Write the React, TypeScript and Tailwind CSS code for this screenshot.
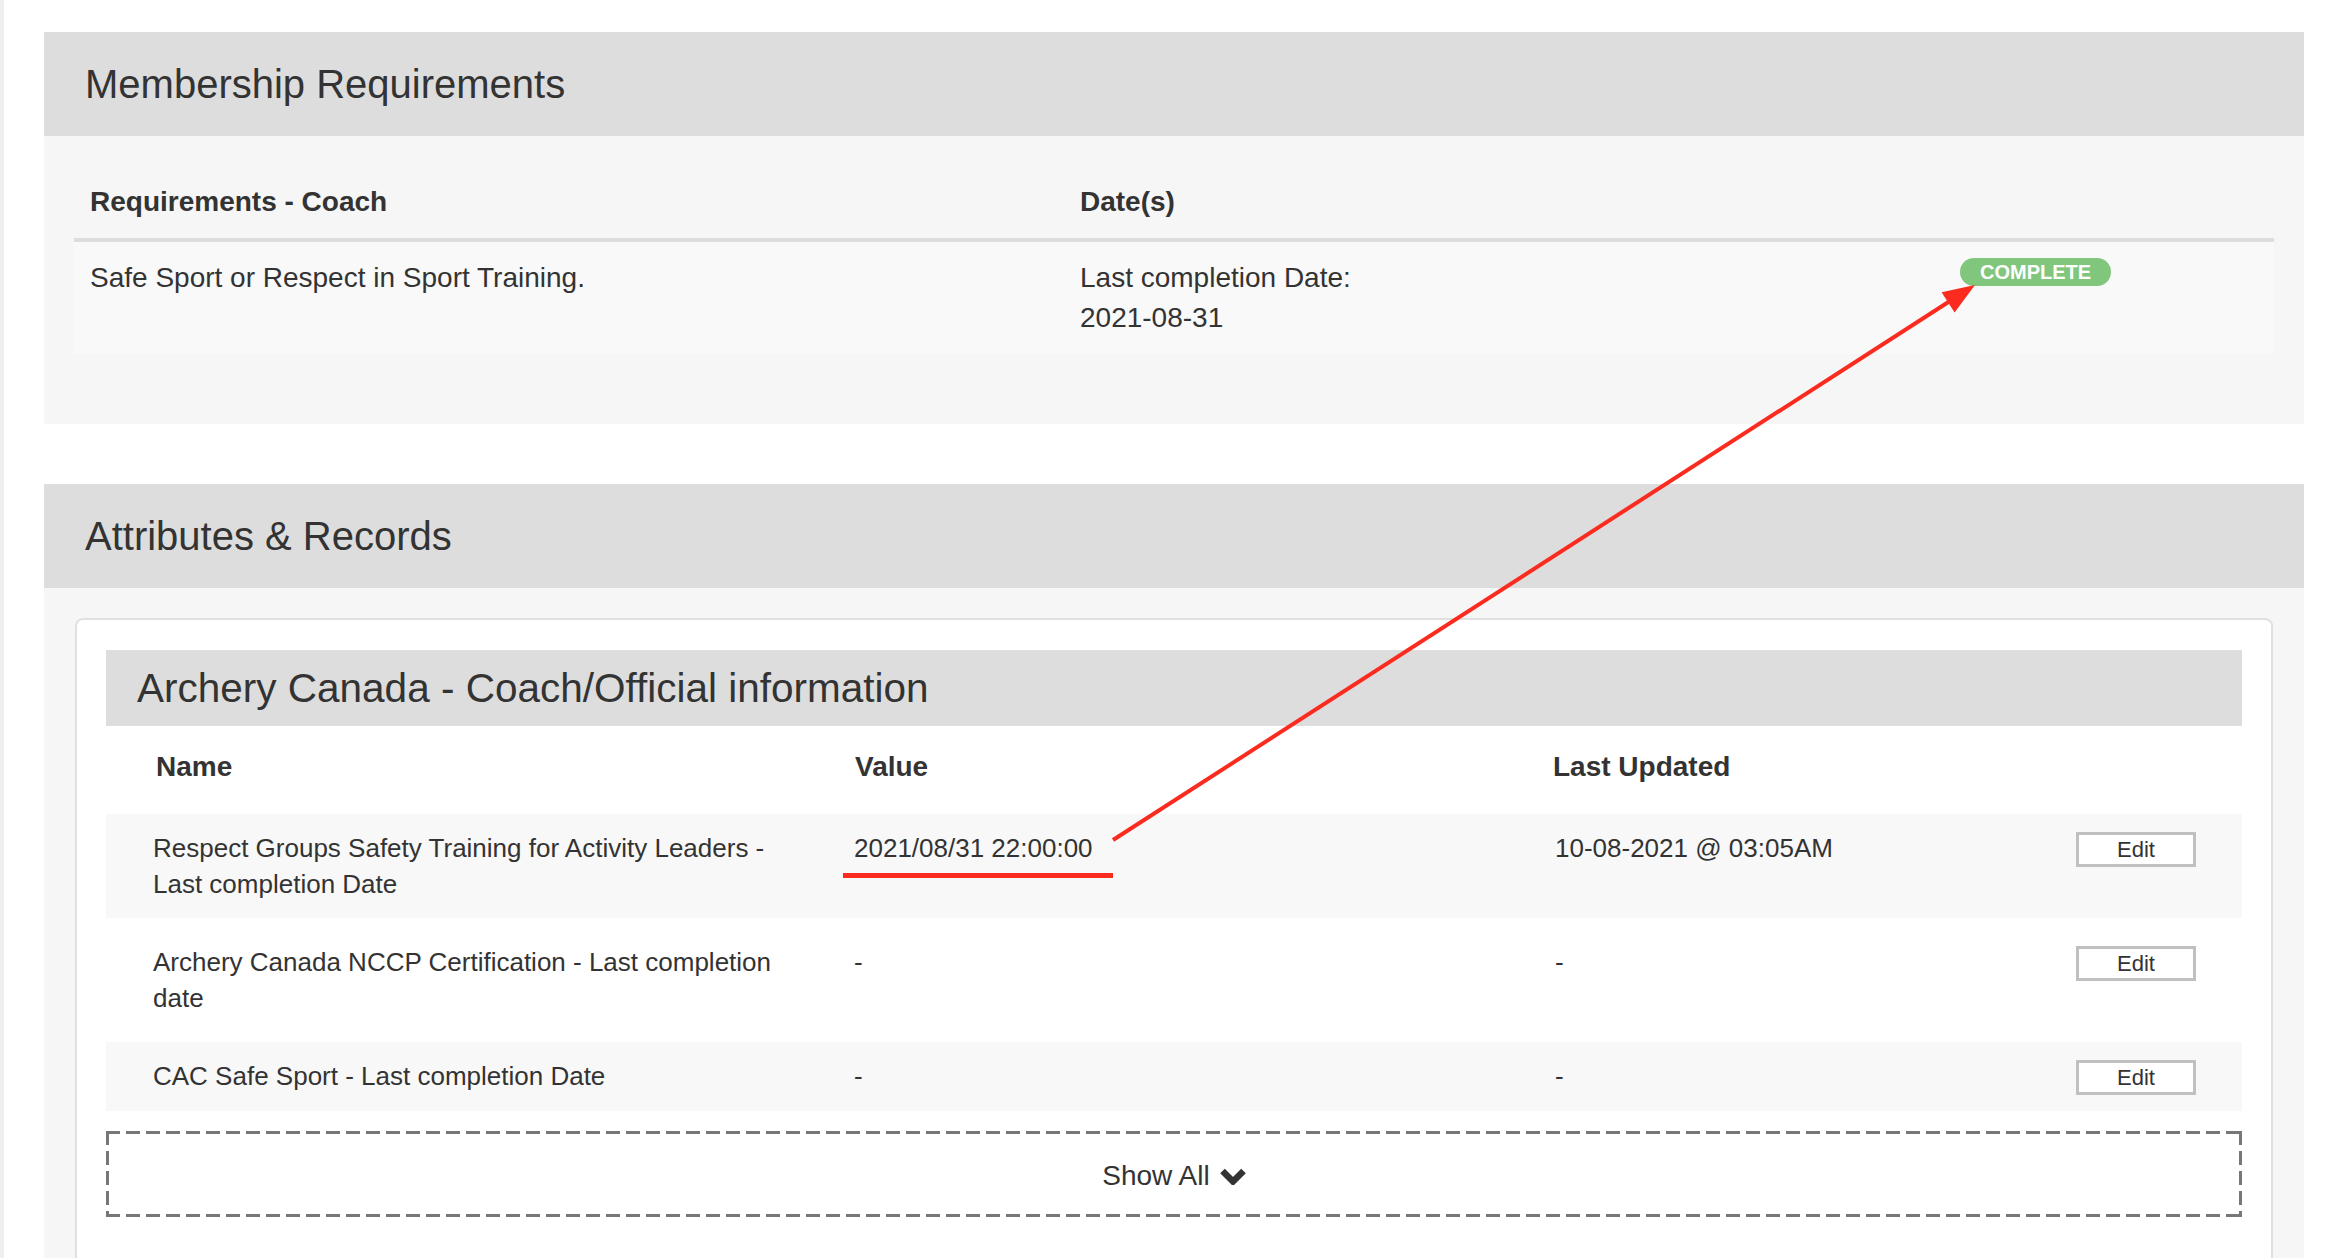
import React from 'react';

const requirements = [
  { name: 'Safe Sport or Respect in Sport Training.', dates: ['Last completion Date:', '2021-08-31'], status: 'COMPLETE' },
];

const records = [
  {
    name: 'Respect Groups Safety Training for Activity Leaders - Last completion Date',
    value: '2021/08/31 22:00:00',
    updated: '10-08-2021 @ 03:05AM',
    pad: 'py-[16px] bg-[#f8f8f8]',
  },
  {
    name: 'Archery Canada NCCP Certification - Last completion date',
    value: '-',
    updated: '-',
    pad: 'py-[26px] bg-white',
  },
  {
    name: 'CAC Safe Sport - Last completion Date',
    value: '-',
    updated: '-',
    pad: 'py-[16px] bg-[#f8f8f8]',
  },
];

const SectionHeader: React.FC<{ title: string }> = ({ title }) => (
  <div className="h-[104px] bg-[#dddddd] pl-[41px] flex items-center">
    <h2 className="text-[40px] font-normal text-[#333]">{title}</h2>
  </div>
);

const EditButton = () => (
  <button className="w-[120px] h-[35px] border-[3px] border-[#c0c0c0] bg-white text-[22px] leading-[29px] text-[#333]">
    Edit
  </button>
);

const Annotation = () => (
  <svg
    className="absolute left-0 top-0 pointer-events-none"
    width="2328"
    height="1258"
    viewBox="0 0 2328 1258"
  >
    <rect x="843" y="873" width="270" height="5" fill="#fb2b1f" />
    <line x1="1113" y1="840" x2="1950" y2="301" stroke="#fb2b1f" strokeWidth="4" />
    <polygon points="1975,285 1954.6,312.4 1941.6,292.2" fill="#fb2b1f" />
  </svg>
);

export default function App() {
  return (
    <div className="relative min-h-screen bg-white flex font-['Liberation_Sans',Arial,sans-serif] text-[#333] overflow-hidden">
      <div className="w-[4px] shrink-0 bg-[#efefef]" />
      <div className="flex-1 pl-[40px] pr-[24px] pt-[32px]">
        {/* Membership Requirements */}
        <SectionHeader title="Membership Requirements" />
        <div className="bg-[#f6f6f6] px-[30px] pt-[30px] pb-[70px]">
          <div className="grid grid-cols-[990px_880px_1fr] h-[76px] items-center border-b-4 border-[#dddddd] text-[28px] font-bold">
            <div className="pl-[16px]">Requirements - Coach</div>
            <div className="pl-[16px]">Date(s)</div>
            <div />
          </div>
          {requirements.map((r) => (
            <div key={r.name} className="grid grid-cols-[990px_880px_1fr] py-[16px] bg-[#f9f9f9] text-[28px] leading-[40px]">
              <div className="pl-[16px]">{r.name}</div>
              <div className="pl-[16px]">
                {r.dates.map((d) => (
                  <div key={d}>{d}</div>
                ))}
              </div>
              <div className="pl-[16px]">
                <span className="block w-fit h-[28px] px-[20px] rounded-full bg-[#80c67d] text-white text-[20px] font-bold leading-[28px]">
                  {r.status}
                </span>
              </div>
            </div>
          ))}
        </div>

        {/* Attributes & Records */}
        <div className="mt-[60px]">
          <SectionHeader title="Attributes & Records" />
          <div className="bg-[#f6f6f6] px-[31px] pt-[30px] pb-[60px]">
            <div className="bg-white border-2 border-[#e0e0e0] rounded-[8px] px-[29px] pt-[30px] pb-[80px]">
              <div className="h-[76px] bg-[#dddddd] pl-[31px] flex items-center">
                <h3 className="text-[40.5px] font-normal">Archery Canada - Coach/Official information</h3>
              </div>
              <div className="grid grid-cols-[701px_701px_1fr_auto] h-[88px] pt-[23px] text-[28px] font-bold leading-[36px]">
                <div className="pl-[50px]">Name</div>
                <div className="pl-[48px]">Value</div>
                <div className="pl-[45px]">Last Updated</div>
                <div className="w-[166px]" />
              </div>
              {records.map((rec) => (
                <div key={rec.name} className={`grid grid-cols-[701px_701px_1fr_auto] text-[26px] leading-[36px] ${rec.pad}`}>
                  <div className="pl-[47px] pr-[20px]">{rec.name}</div>
                  <div className="pl-[47px]">{rec.value}</div>
                  <div className="pl-[47px]">{rec.updated}</div>
                  <div className="pr-[46px]">
                    <EditButton />
                  </div>
                </div>
              ))}
              <button className="mt-[20px] w-full h-[86px] flex items-center justify-center gap-[10px] text-[28px] bg-[linear-gradient(to_right,#777_14px,transparent_14px),linear-gradient(to_right,#777_14px,transparent_14px),linear-gradient(to_bottom,#777_14px,transparent_14px),linear-gradient(to_bottom,#777_14px,transparent_14px)] bg-[length:20px_3px,20px_3px,3px_20px,3px_20px] bg-[position:left_top,left_bottom,left_top,right_top] [background-repeat:repeat-x,repeat-x,repeat-y,repeat-y]">
                <span className="pt-[3px]">Show All</span>
                <svg width="26" height="17" viewBox="0 0 26 17" className="mt-[4px]">
                  <path d="M2.5 3 L13 13.5 L23.5 3" fill="none" stroke="#333" strokeWidth="6.5" strokeLinejoin="miter" />
                </svg>
              </button>
            </div>
          </div>
        </div>
      </div>
      <Annotation />
    </div>
  );
}
